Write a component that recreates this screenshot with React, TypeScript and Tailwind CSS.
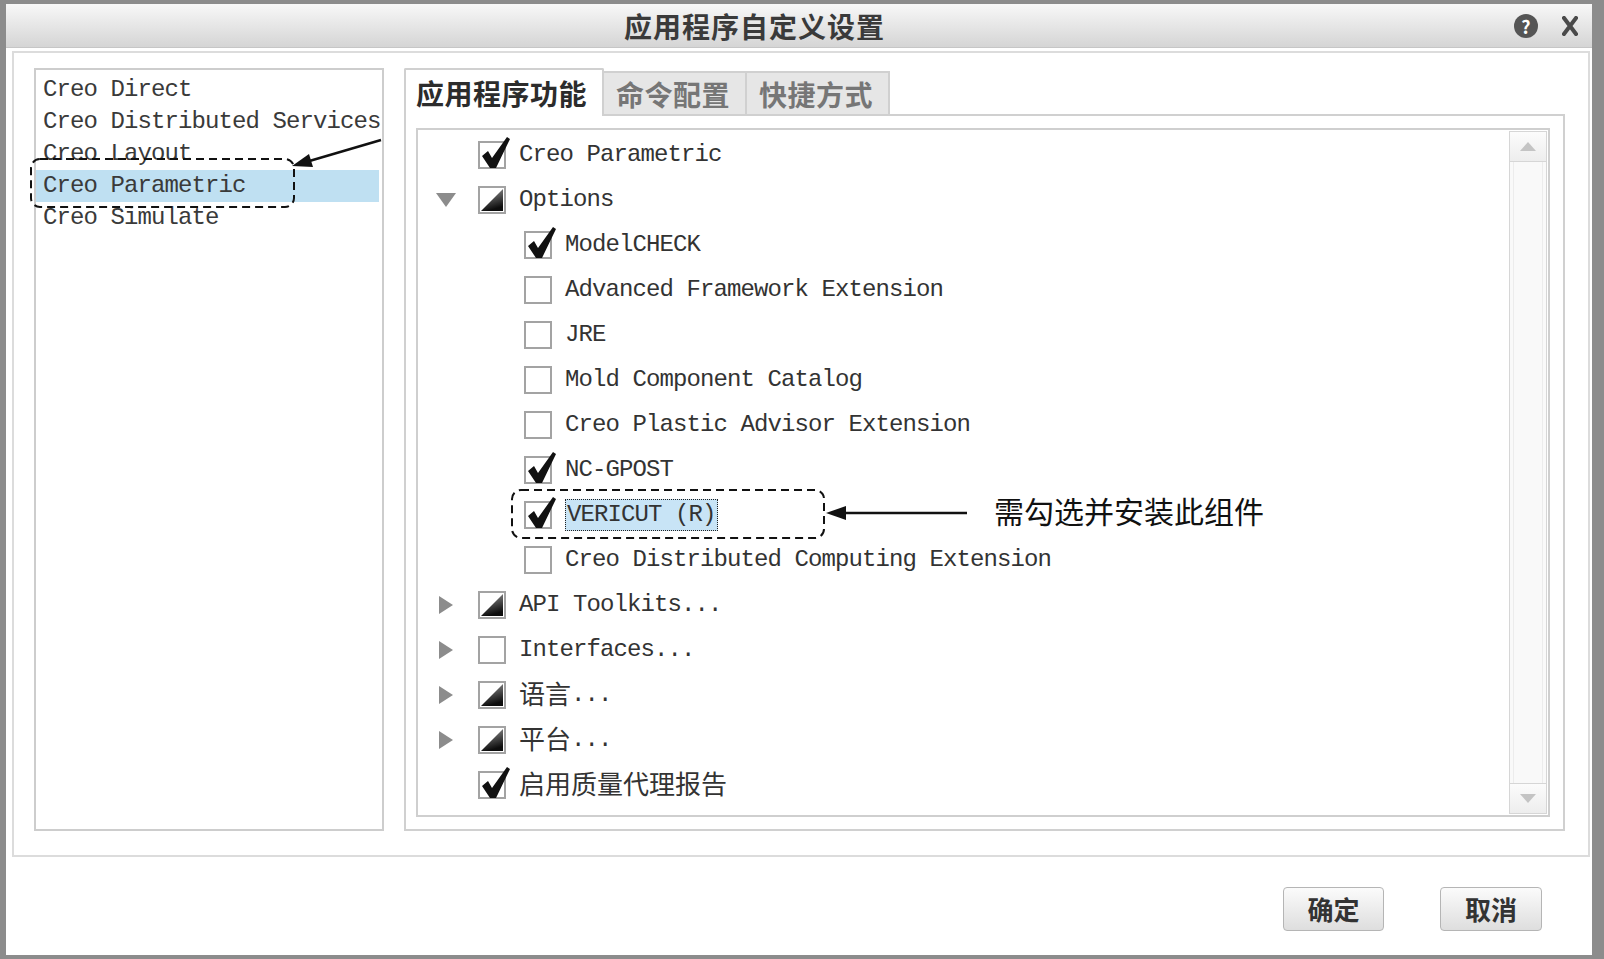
import React from "react";

type BoxState = "on" | "off" | "part";

interface TreeRow {
  level: number;
  arrow?: "down" | "right";
  state: BoxState;
  text?: string;
  cn?: string;
  focus?: boolean;
}

const mono = "font-['Liberation_Mono','Noto_Sans_CJK_SC',monospace] text-[24px] tracking-[-0.9px]";
const cjk = "font-['Noto_Sans_CJK_SC',sans-serif]";

const apps = ["Creo Direct", "Creo Distributed Services", "Creo Layout", "Creo Parametric", "Creo Simulate"];

const rows: TreeRow[] = [
  { level: 0, state: "on", text: "Creo Parametric" },
  { level: 0, arrow: "down", state: "part", text: "Options" },
  { level: 1, state: "on", text: "ModelCHECK" },
  { level: 1, state: "off", text: "Advanced Framework Extension" },
  { level: 1, state: "off", text: "JRE" },
  { level: 1, state: "off", text: "Mold Component Catalog" },
  { level: 1, state: "off", text: "Creo Plastic Advisor Extension" },
  { level: 1, state: "on", text: "NC-GPOST" },
  { level: 1, state: "on", text: "VERICUT (R)", focus: true },
  { level: 1, state: "off", text: "Creo Distributed Computing Extension" },
  { level: 0, arrow: "right", state: "part", text: "API Toolkits..." },
  { level: 0, arrow: "right", state: "off", text: "Interfaces..." },
  { level: 0, arrow: "right", state: "part", cn: "语言", text: "..." },
  { level: 0, arrow: "right", state: "part", cn: "平台", text: "..." },
  { level: 0, state: "on", cn: "启用质量代理报告" },
];

const CheckBox = ({ state }: { state: BoxState }) => {
  return (
    <span className="relative inline-block h-[28px] w-[28px] shrink-0 border-2 border-[#a3a3a3] bg-white">
      {state === "part" && (
        <svg className="absolute left-0 top-0" width="24" height="24" viewBox="0 0 24 24">
          <defs>
            <linearGradient id="partGrad" x1="0" y1="0" x2="0.3" y2="1">
              <stop offset="0" stopColor="#9a9a9a" />
              <stop offset="1" stopColor="#0d0d0d" />
            </linearGradient>
          </defs>
          <polygon points="1,23 23,1 23,23" fill="url(#partGrad)" />
        </svg>
      )}
      {state === "on" && (
        <svg className="absolute left-[-2px] top-[-10px]" width="36" height="40" viewBox="0 0 36 40">
          <polygon points="4,23 10,18 14,25 29,4 32,6 18,35 12,35" fill="#111" />
        </svg>
      )}
    </span>
  );
};

const Arrow = ({ dir }: { dir?: "down" | "right" }) => {
  return (
    <span className="flex w-[22px] shrink-0 justify-center">
      {dir === "down" && (
        <svg width="20" height="14" viewBox="0 0 20 14">
          <polygon points="0,0 20,0 10,14" fill="#8c8c8c" />
        </svg>
      )}
      {dir === "right" && (
        <svg width="14" height="18" viewBox="0 0 14 18">
          <polygon points="0,0 14,9 0,18" fill="#8c8c8c" />
        </svg>
      )}
    </span>
  );
};

const Row = ({ row }: { row: TreeRow }) => {
  return (
    <div className="flex h-[45px] items-center pl-[17px]">
      <Arrow dir={row.arrow} />
      <span className={row.level === 1 ? "ml-[67px] flex" : "ml-[21px] flex"}>
        <CheckBox state={row.state} />
      </span>
      <span className="ml-[13px] flex items-center leading-none text-[#333]">
        {row.cn && <span className={`${cjk} -mt-[4px] text-[26px]`}>{row.cn}</span>}
        {row.text && (
          <span
            className={
              row.focus
                ? `${mono} border border-dotted border-[#222] bg-[#c8e4f6] px-[1px] py-[3px]`
                : mono
            }
          >
            {row.text}
          </span>
        )}
      </span>
    </div>
  );
};

const ScrollBar = () => {
  return (
    <div className="my-[1px] mr-[1px] flex w-[38px] flex-col border border-[#d6d6d6] bg-[#f9f9f9]">
      <div className="flex h-[30px] items-center justify-center border-b border-[#d6d6d6] bg-linear-to-b from-[#fcfcfc] to-[#ededed]">
        <svg width="16" height="9" viewBox="0 0 16 9">
          <polygon points="0,9 8,0 16,9" fill="#c4c4c4" />
        </svg>
      </div>
      <div className="mx-[3px] flex-1 border-x border-[#ececec]" />
      <div className="flex h-[30px] items-center justify-center border-t border-[#d6d6d6] bg-linear-to-b from-[#fcfcfc] to-[#ededed]">
        <svg width="16" height="9" viewBox="0 0 16 9">
          <polygon points="0,0 16,0 8,9" fill="#c4c4c4" />
        </svg>
      </div>
    </div>
  );
};

const App = () => {
  return (
    <div className="relative h-[959px] w-[1604px] overflow-hidden bg-white">
      <div className="flex h-full w-full flex-col border-b-[4px] border-l-[6px] border-r-[12px] border-t-[4px] border-[#8c8c8c] bg-white">
        {/* title bar */}
        <div className="flex h-[44px] shrink-0 items-center border-b border-[#c6c6c6] bg-linear-to-b from-[#f8f8f8] to-[#d5d5d5]">
          <span className={`${cjk} ml-[618px] text-[28px] font-bold leading-none tracking-[1px] text-[#3a3a3a]`}>
            应用程序自定义设置
          </span>
          <div className="ml-auto mr-[14px] flex items-center gap-[24px]">
            <span className={`${cjk} flex h-[24px] w-[24px] items-center justify-center rounded-full bg-[#555] text-[18px] font-bold leading-none text-white`}>
              ?
            </span>
            <svg width="16" height="20" viewBox="0 0 16 20">
              <path d="M2 2 L14 18 M14 2 L2 18" stroke="#4a4a4a" strokeWidth="4" strokeLinecap="square" />
            </svg>
          </div>
        </div>

        {/* group box */}
        <div className="ml-[6px] mr-[2px] mt-[3px] flex h-[806px] shrink-0 border-2 border-[#dcdcdc] pb-[24px] pl-[20px] pt-[15px]">
          {/* app list */}
          <div className="w-[350px] shrink-0 border-2 border-[#cdcdcd] bg-white pt-[4px]">
            {apps.map((a) => (
              <div
                key={a}
                className={
                  a === "Creo Parametric"
                    ? `${mono} mr-[3px] flex h-[32px] items-center bg-[#bfe0f2] pl-[7px] leading-none text-[#3a3a3a]`
                    : `${mono} flex h-[32px] items-center pl-[7px] leading-none text-[#3a3a3a]`
                }
              >
                {a}
              </div>
            ))}
          </div>

          {/* tab panel */}
          <div className="ml-[20px] flex w-[1161px] shrink-0 flex-col">
            <div className="flex h-[46px] shrink-0 items-start">
              <div className={`${cjk} relative z-10 -mb-[2px] flex h-[48px] w-[200px] items-center rounded-t-[2px] border-2 border-b-0 border-[#d0d0d0] bg-white pl-[10px] text-[28px] font-bold leading-none tracking-[0.5px] text-[#2c2c2c]`}>
                应用程序功能
              </div>
              <div className={`${cjk} mt-[3px] flex h-[43px] w-[143px] items-center border-2 border-b-0 border-l-0 border-[#d0d0d0] bg-[#e6e6e6] pl-[12px] text-[28px] font-bold leading-none tracking-[0.5px] text-[#767676]`}>
                命令配置
              </div>
              <div className={`${cjk} mt-[3px] flex h-[43px] w-[143px] items-center border-2 border-b-0 border-l-0 border-[#d0d0d0] bg-[#e6e6e6] pl-[12px] text-[28px] font-bold leading-none tracking-[0.5px] text-[#767676]`}>
                快捷方式
              </div>
            </div>
            <div className="flex flex-1 flex-col border-2 border-[#d0d0d0] pb-[12px] pl-[10px] pr-[13px] pt-[12px]">
              <div className="flex flex-1 border-2 border-[#cfcfcf] bg-white">
                <div className="flex-1 pt-[2px]">
                  {rows.map((r, i) => (
                    <Row key={i} row={r} />
                  ))}
                </div>
                <ScrollBar />
              </div>
            </div>
          </div>
        </div>

        {/* buttons */}
        <div className="flex flex-1 items-start justify-end gap-[56px] pr-[50px] pt-[30px]">
          <button className={`${cjk} flex h-[44px] w-[101px] items-center justify-center rounded-[4px] border border-[#b5b5b5] bg-linear-to-b from-[#fbfbfb] to-[#dedede] text-[26px] font-bold leading-none text-[#333]`}>
            确定
          </button>
          <button className={`${cjk} flex h-[44px] w-[102px] items-center justify-center rounded-[4px] border border-[#b5b5b5] bg-linear-to-b from-[#fbfbfb] to-[#dedede] text-[26px] font-bold leading-none text-[#333]`}>
            取消
          </button>
        </div>
      </div>

      {/* annotations */}
      <svg className="pointer-events-none absolute left-0 top-0" width="1604" height="959" viewBox="0 0 1604 959">
        <rect x="31" y="159" width="263" height="48" rx="9" fill="none" stroke="#111" strokeWidth="2" strokeDasharray="8 5" />
        <line x1="381" y1="140" x2="306" y2="162" stroke="#111" strokeWidth="2.5" />
        <polygon points="292,166 313,167 309,154" fill="#111" />
        <rect x="512" y="490" width="312" height="48" rx="9" fill="none" stroke="#111" strokeWidth="2" strokeDasharray="8 5" />
        <line x1="967" y1="513" x2="842" y2="513" stroke="#111" strokeWidth="2.5" />
        <polygon points="826,513 846,506 846,520" fill="#111" />
      </svg>
      <span className={`${cjk} absolute left-[994px] top-[494px] text-[30px] leading-[32px] text-[#111]`}>
        需勾选并安装此组件
      </span>
    </div>
  );
};

export default App;
